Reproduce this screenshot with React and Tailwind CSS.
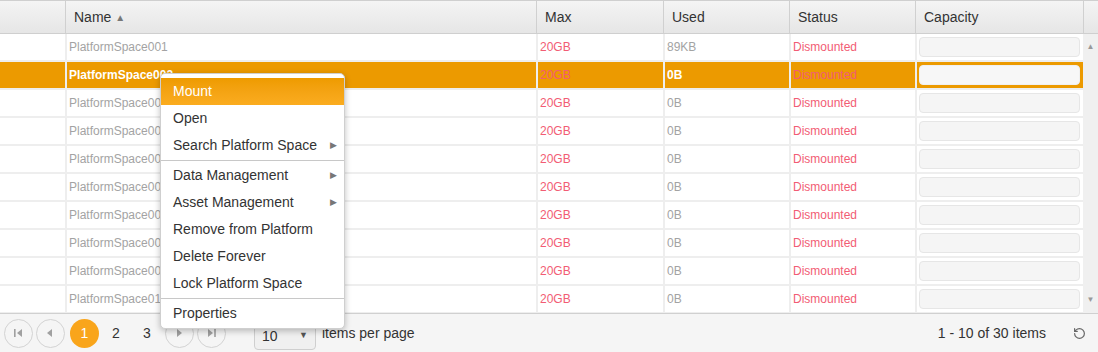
import { RotateCw } from "lucide-react";

const rows = Array.from({ length: 10 }, (_, i) => ({
  name: "PlatformSpace0" + String(i + 1).padStart(2, "0"),
  max: "20GB",
  used: i === 0 ? "89KB" : "0B",
  status: "Dismounted",
}));

const menu = [
  { label: "Mount", active: true },
  { label: "Open" },
  { label: "Search Platform Space", sub: true },
  { sep: true },
  { label: "Data Management", sub: true },
  { label: "Asset Management", sub: true },
  { label: "Remove from Platform" },
  { label: "Delete Forever" },
  { label: "Lock Platform Space" },
  { sep: true },
  { label: "Properties" },
];

const cols = [
  { w: "w-[65px]", label: "" },
  { w: "w-[471px]", label: "Name", sort: true },
  { w: "w-[127px]", label: "Max" },
  { w: "w-[126px]", label: "Used" },
  { w: "w-[126px]", label: "Status" },
  { w: "w-[168px]", label: "Capacity" },
];

function PagerIcon({ dir, bar }) {
  // small triangle, optionally with a bar (first / last)
  const tri = dir === "left" ? "M6 1 L6 9 L1 5 Z" : "M2 1 L2 9 L7 5 Z";
  return (
    <div className="w-[29px] h-[29px] rounded-full border border-[#d3d3d3] flex items-center justify-center">
      <svg width="9" height="10" viewBox="0 0 9 10" fill="#a0a0a0">
        {bar && dir === "left" && <rect x="0" y="1" width="1.6" height="8" />}
        <path d={bar && dir === "left" ? "M8 1 L8 9 L3 5 Z" : bar ? "M1 1 L1 9 L6 5 Z" : tri} />
        {bar && dir === "right" && <rect x="7.2" y="1" width="1.6" height="8" />}
      </svg>
    </div>
  );
}

export default function App() {
  return (
    <div
      className="relative w-[1098px] h-[352px] bg-white overflow-hidden text-[#333]"
      style={{ fontFamily: '"Liberation Sans", Arial, sans-serif' }}
    >
      {/* header */}
      <div className="flex h-[34px] border-t border-b border-[#cfcfcf] bg-gradient-to-b from-[#f4f4f4] to-[#e6e6e6]">
        {cols.map((c, i) => (
          <div
            key={i}
            className={`${c.w} h-full flex items-center pl-[8px] text-[14px] ${i > 0 ? "border-l border-[#d0d0d0]" : ""}`}
          >
            {c.label}
            {c.sort && <span className="ml-[4px] text-[10px] text-[#777]">▲</span>}
          </div>
        ))}
        <div className="flex-1 border-l border-[#d0d0d0]" />
      </div>

      {/* body */}
      <div className="flex h-[279px] overflow-hidden">
        <div className="w-[1083px]">
          {rows.map((r, i) => {
            const sel = i === 1;
            return (
              <div
                key={i}
                className={`flex h-[28px] border-b-2 border-[#eeeeee] text-[12px] ${sel ? "bg-[#ec9a00]" : "bg-white"}`}
              >
                <div className="w-[65px]" />
                <div
                  className={`w-[471px] border-l-2 border-[#eeeeee] pl-[2px] flex items-center ${sel ? "text-white font-bold" : "text-[#a3a3a3]"}`}
                >
                  {r.name}
                </div>
                <div className="w-[127px] border-l-2 border-[#eeeeee] pl-[2px] flex items-center text-[#f25c74]">
                  {r.max}
                </div>
                <div
                  className={`w-[126px] border-l-2 border-[#eeeeee] pl-[2px] flex items-center ${sel ? "text-white font-bold" : "text-[#a3a3a3]"}`}
                >
                  {r.used}
                </div>
                <div className="w-[126px] border-l-2 border-[#eeeeee] pl-[2px] flex items-center text-[#f25c74]">
                  {r.status}
                </div>
                <div className="w-[168px] border-l-2 border-[#eeeeee] pl-[2px] pr-[3px] flex items-center">
                  <div
                    className={`w-full h-[20px] rounded-[4px] border ${sel ? "bg-[#f7f7f7] border-[#f0f0f0]" : "bg-[#f5f5f5] border-[#e6e6e6]"}`}
                  />
                </div>
              </div>
            );
          })}
        </div>
        <div className="flex-1 bg-[#f0f0f0] flex flex-col items-center justify-between py-[7px] text-[8px] text-[#999]">
          <span>▲</span>
          <span>▼</span>
        </div>
      </div>

      {/* pager */}
      <div className="flex items-center h-[39px] border-t border-[#d0d0d0] bg-[#f5f5f5] pl-[4px] pr-[12px] text-[14px]">
        <div className="flex items-center gap-[3px]">
          <PagerIcon dir="left" bar />
          <PagerIcon dir="left" />
        </div>
        <div className="ml-[5px] w-[29px] h-[29px] rounded-full bg-[#f9a51b] text-white flex items-center justify-center">
          1
        </div>
        <span className="ml-[13px] w-[20px]">2</span>
        <span className="ml-[11px] w-[22px]">3</span>
        <div className="flex items-center gap-[3px] ml-[0px]">
          <PagerIcon dir="right" />
          <PagerIcon dir="right" bar />
        </div>
        <div className="ml-[28px] mt-[6px] w-[62px] h-[27px] border border-[#cfcfcf] rounded-[4px] bg-[#f0f0f0] flex items-center justify-between px-[7px]">
          <span>10</span>
          <span className="text-[9px] text-[#555]">▼</span>
        </div>
        <span className="ml-[6px]">items per page</span>
        <span className="ml-auto">1 - 10 of 30 items</span>
        <RotateCw className="ml-[27px] w-[13px] h-[13px] text-[#666] -scale-x-100" strokeWidth={2.2} />
      </div>

      {/* context menu */}
      <div className="absolute left-[160px] top-[73px] w-[185px] bg-white border border-[#cfcfcf] rounded-[5px] shadow-[0_2px_6px_rgba(0,0,0,0.25)] pt-[4px] pb-[1px] text-[14px]">
        {menu.map((m, i) =>
          m.sep ? (
            <div key={i} className="h-[3px] flex items-center">
              <div className="h-px w-full bg-[#c8c8c8]" />
            </div>
          ) : (
            <div
              key={i}
              className={`h-[27px] flex items-center pl-[12px] pr-[7px] ${m.active ? "bg-gradient-to-b from-[#ee9b00] to-[#fbac1f] text-white" : "text-[#333]"}`}
            >
              <span className="flex-1">{m.label}</span>
              {m.sub && <span className="text-[9px] text-[#777]">▶</span>}
            </div>
          )
        )}
      </div>
    </div>
  );
}
